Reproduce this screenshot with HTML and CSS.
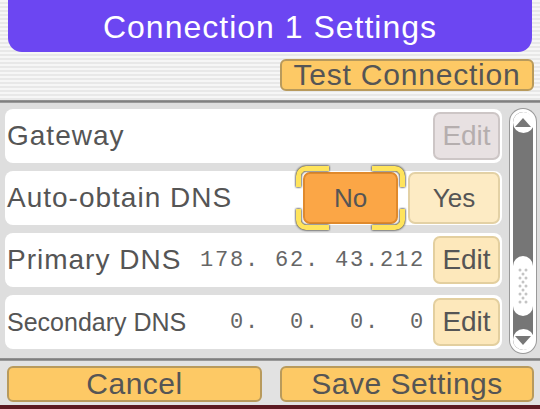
FILE: index.html
```html
<!DOCTYPE html>
<html>
<head>
  <title>Connection 1 Settings</title>
  <link rel="stylesheet" href="styles.css">
</head>
<body>
  <div class="screen">
    <div class="top">
      <div class="header">Connection 1 Settings</div>
      <div class="test-row">
        <button class="btn test">Test Connection</button>
      </div>
    </div>
    <div class="divider"></div>

    <div class="list">
      <div class="rows">
        <div class="row">
          <span class="label">Gateway</span>
          <button class="edit disabled">Edit</button>
        </div>
        <div class="row">
          <span class="label">Auto-obtain DNS</span>
          <div class="toggle">
            <span class="choice selected">No
              <span class="corner tl"></span><span class="corner tr"></span>
              <span class="corner bl"></span><span class="corner br"></span>
            </span>
            <span class="choice">Yes</span>
          </div>
        </div>
        <div class="row">
          <span class="label">Primary DNS</span>
          <span class="ip">178. 62. 43.212</span>
          <button class="edit">Edit</button>
        </div>
        <div class="row">
          <span class="label small">Secondary DNS</span>
          <span class="ip">  0.  0.  0.  0</span>
          <button class="edit">Edit</button>
        </div>
      </div>

      <div class="scrollbar">
        <div class="arrow up">
          <svg width="20" height="12" viewBox="0 0 20 12"><path d="M2 11 L10 2 L18 11 Z" fill="#777"/></svg>
        </div>
        <div class="track">
          <div class="thumb">
            <svg width="14" height="40" viewBox="0 0 14 40">
              <g fill="#c4c4c4">
                <circle cx="4" cy="4" r="1.5"/><circle cx="10" cy="4" r="1.5"/>
                <circle cx="7" cy="8" r="1.5"/>
                <circle cx="4" cy="12" r="1.5"/><circle cx="10" cy="12" r="1.5"/>
                <circle cx="7" cy="16" r="1.5"/>
                <circle cx="4" cy="20" r="1.5"/><circle cx="10" cy="20" r="1.5"/>
                <circle cx="7" cy="24" r="1.5"/>
                <circle cx="4" cy="28" r="1.5"/><circle cx="10" cy="28" r="1.5"/>
                <circle cx="7" cy="32" r="1.5"/>
                <circle cx="4" cy="36" r="1.5"/><circle cx="10" cy="36" r="1.5"/>
              </g>
            </svg>
          </div>
        </div>
        <div class="arrow down">
          <svg width="20" height="12" viewBox="0 0 20 12"><path d="M2 1 L10 10 L18 1 Z" fill="#777"/></svg>
        </div>
      </div>
    </div>

    <div class="divider"></div>
    <div class="footer">
      <button class="btn">Cancel</button>
      <button class="btn">Save Settings</button>
    </div>
    <div class="edge"></div>
  </div>
</body>
</html>
```

FILE: styles.css
```css
body {
  margin: 0;
  padding: 0;
  font-family: "Liberation Sans", Arial, sans-serif;
  color: #555;
}

.screen {
  width: 540px;
  height: 409px;
  overflow: hidden;
  display: flex;
  flex-direction: column;
}

.top {
  height: 100px;
  background: repeating-linear-gradient(to bottom, #f6f6f6 0, #f6f6f6 2px, #e8e8e8 2px, #e8e8e8 4px);
}

.header {
  margin: 0 8px;
  height: 52px;
  background-color: #6c46f2;
  border-radius: 0 0 14px 14px;
  color: #fff;
  font-size: 32px;
  letter-spacing: 1px;
  text-align: center;
  line-height: 54px;
}

.test-row {
  display: flex;
  justify-content: flex-end;
  padding: 7px 6px 0 0;
}

.btn {
  font-family: "Liberation Sans", Arial, sans-serif;
  color: #555;
  background-color: #fdc965;
  border: 2px solid #b89a5c;
  border-radius: 6px;
  padding: 0;
  cursor: pointer;
}

.test {
  width: 254px;
  height: 32px;
  font-size: 30px;
  letter-spacing: 0.8px;
  line-height: 28px;
}

.divider {
  height: 3px;
  background: linear-gradient(to bottom, #999 0, #777 2px, #bbb 3px);
}

.list {
  height: 255px;
  background-color: #dedede;
  display: flex;
}

.rows {
  width: 497px;
  padding: 6px 0 0 5px;
  display: flex;
  flex-direction: column;
  gap: 8px;
}

.row {
  height: 54px;
  background-color: #fff;
  border-radius: 8px;
  display: flex;
  align-items: center;
  padding: 0 2px 0 2px;
}

.label {
  font-size: 28px;
  letter-spacing: 1px;
  color: #555;
  flex: 1;
}

.label.small {
  font-size: 25px;
  letter-spacing: 0;
}

.ip {
  font-family: "Liberation Mono", "DejaVu Sans Mono", monospace;
  font-size: 22px;
  letter-spacing: 1.8px;
  white-space: pre;
  color: #666;
  margin-right: 8px;
}

.edit {
  width: 67px;
  height: 48px;
  font-family: "Liberation Sans", Arial, sans-serif;
  font-size: 28px;
  color: #555;
  background-color: #fde8bb;
  border: 2px solid #e3cf9f;
  border-radius: 7px;
  padding: 0;
}

.edit.disabled {
  background-color: #e8e1e2;
  border-color: #cdc6c6;
  color: #b5aeae;
}

.toggle {
  display: flex;
  gap: 10px;
  align-items: center;
}

.choice {
  position: relative;
  height: 48px;
  line-height: 48px;
  text-align: center;
  font-size: 26px;
  border-radius: 7px;
  background-color: #fdebc4;
  border: 2px solid #e3d1a5;
  width: 88px;
}

.choice.selected {
  width: 91px;
  background-color: #fba646;
  border-color: #e08a2c;
}

.corner {
  position: absolute;
  width: 28px;
  height: 16px;
  border: 5px solid #ffe45c;
  filter: drop-shadow(0 0 0.8px #555) drop-shadow(0 0 0.3px #555);
}

.corner.tl {
  top: -8px;
  left: -9px;
  border-right: none;
  border-bottom: none;
  border-radius: 10px 0 0 0;
}

.corner.tr {
  top: -8px;
  right: -9px;
  border-left: none;
  border-bottom: none;
  border-radius: 0 10px 0 0;
}

.corner.bl {
  bottom: -8px;
  left: -9px;
  border-right: none;
  border-top: none;
  border-radius: 0 0 0 10px;
}

.corner.br {
  bottom: -8px;
  right: -9px;
  border-left: none;
  border-top: none;
  border-radius: 0 0 10px 0;
}

.scrollbar {
  width: 26px;
  margin: 6px 0 0 8px;
  height: 244px;
  background-color: #767676;
  border: 3px solid #fff;
  border-radius: 14px;
  box-shadow: 0 0 0 1px #999;
  display: flex;
  flex-direction: column;
  align-items: center;
  box-sizing: border-box;
}

.arrow {
  width: 21px;
  height: 21px;
  border-radius: 50%;
  background-color: #fff;
  display: flex;
  align-items: center;
  justify-content: center;
}

.arrow.up svg {
  margin-top: -2px;
}

.arrow.down svg {
  margin-top: 2px;
}

.track {
  flex: 1;
  width: 100%;
  display: flex;
  flex-direction: column;
  justify-content: flex-end;
  align-items: center;
  padding-bottom: 13px;
}

.thumb {
  width: 20px;
  height: 60px;
  background-color: #fff;
  border-radius: 10px;
  display: flex;
  align-items: center;
  justify-content: center;
}

.footer {
  height: 44px;
  background-color: #e2e2e2;
  display: grid;
  grid-template-columns: 255px 254px;
  gap: 18px;
  padding: 5px 0 0 7px;
  box-sizing: border-box;
}

.footer .btn {
  height: 36px;
  font-size: 30px;
  letter-spacing: 0.5px;
  line-height: 30px;
}

.edge {
  height: 4px;
  background-color: #5c1a22;
}
```
